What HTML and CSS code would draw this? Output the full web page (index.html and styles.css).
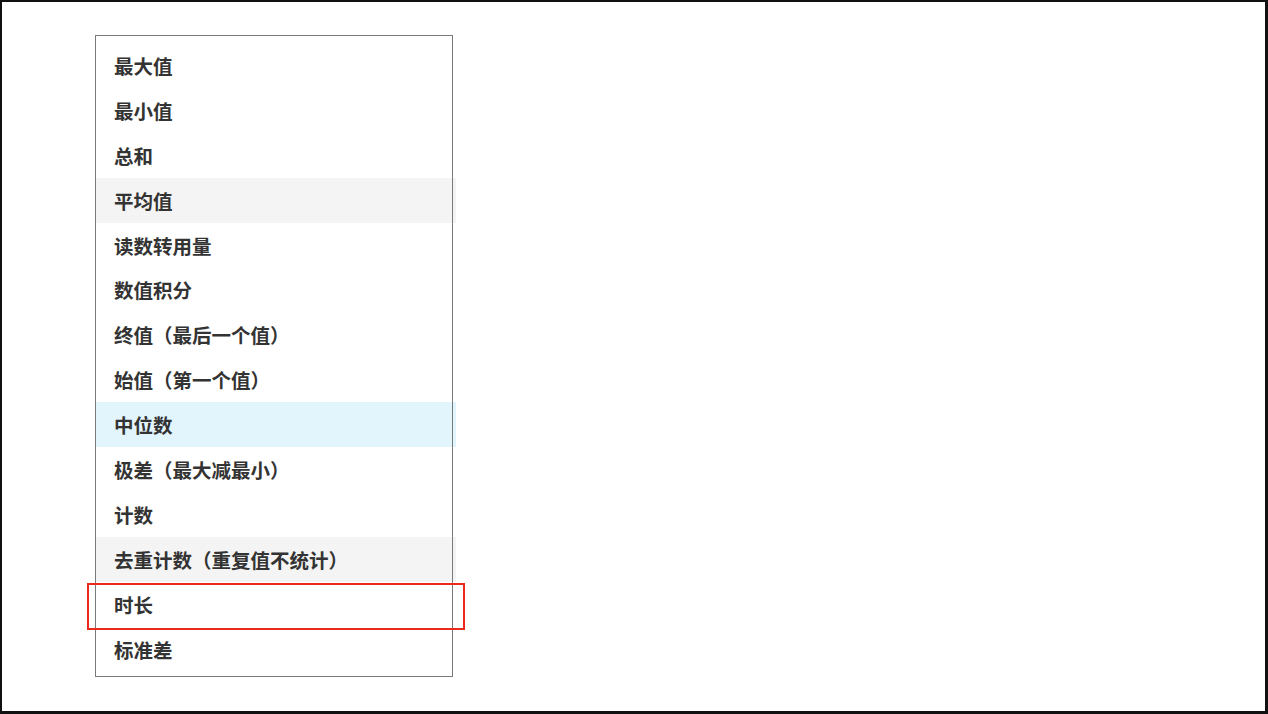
FILE: index.html
```html
<!DOCTYPE html>
<html lang="zh-CN">
<head>
<meta charset="utf-8">
<title>聚合方式</title>
<link rel="stylesheet" href="styles.css">
</head>
<body>
<div class="frame">
  <ul class="menu">
    <li class="item">最大值</li>
    <li class="item">最小值</li>
    <li class="item">总和</li>
    <li class="item hover">平均值</li>
    <li class="item">读数转用量</li>
    <li class="item">数值积分</li>
    <li class="item">终值（最后一个值）</li>
    <li class="item">始值（第一个值）</li>
    <li class="item active">中位数</li>
    <li class="item">极差（最大减最小）</li>
    <li class="item">计数</li>
    <li class="item hover">去重计数（重复值不统计）</li>
    <li class="item marked">时长</li>
    <li class="item">标准差</li>
  </ul>
</div>
</body>
</html>
```

FILE: styles.css
```css
html, body {
  margin: 0;
  padding: 0;
  background: #ffffff;
}

.frame {
  box-sizing: border-box;
  width: 1268px;
  height: 714px;
  border-style: solid;
  border-color: #111111;
  border-width: 2px 3px 3px 2px;
  padding: 33px 0 0 93px;
  background: #ffffff;
}

.menu {
  list-style: none;
  margin: 0;
  box-sizing: border-box;
  width: 358px;
  height: 642px;
  padding: 8px 1px 5px 1px;
  outline: 1px solid #7a7a7a;
  outline-offset: -1px;
  font-family: "PingFang SC", "Noto Sans CJK SC", "Noto Sans", sans-serif;
  font-size: 19.5px;
  font-weight: 700;
  color: #333333;
}

.item {
  box-sizing: border-box;
  height: 44.9px;
  margin-right: -4px;
  padding-left: 18px;
  display: flex;
  align-items: center;
  white-space: nowrap;
}

.item.hover {
  background: #f4f4f4;
}

.item.active {
  background: #e2f5fd;
}

.item.marked {
  position: relative;
}

.item.marked::after {
  content: "";
  position: absolute;
  left: -9px;
  top: 1px;
  width: 378px;
  height: 47px;
  box-sizing: border-box;
  border: 2px solid #ea2a1c;
}
```
